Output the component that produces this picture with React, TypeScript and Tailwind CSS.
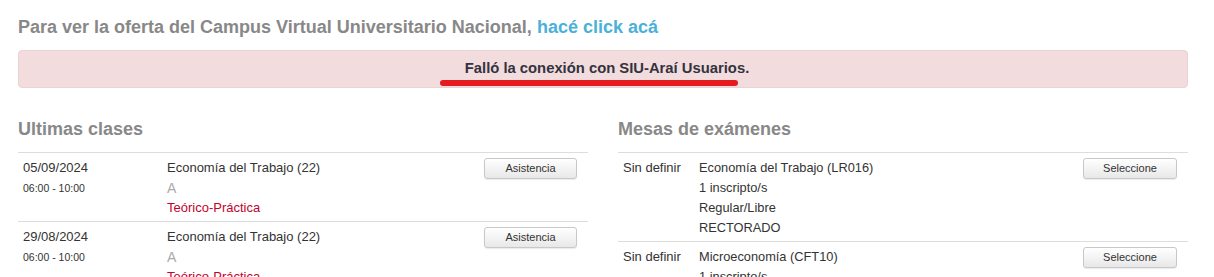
import React from "react";

const btnBase =
  "h-[21px] rounded-[3px] border border-[#c8c8c8] bg-gradient-to-b from-white to-[#e8e8e8] text-[11px] text-[#333] shadow-[0_1px_1px_rgba(0,0,0,0.08)] flex items-center justify-center";

function ClaseRow({ date }: { date: string }) {
  return (
    <div className="flex border-b border-[#dddddd] h-[69px] pt-[5px]">
      <div className="w-[149px] pl-[5px]">
        <div className="text-[13px] leading-[20px] text-[#333]">{date}</div>
        <div className="text-[10.5px] leading-[20px] text-[#333]">06:00 - 10:00</div>
      </div>
      <div className="flex-1 text-[13px] leading-[20px]">
        <div className="text-[#333]">Economía del Trabajo (22)</div>
        <div className="text-[#aaaaaa] text-[14px]">A</div>
        <div className="text-[#c0042c]">Teórico-Práctica</div>
      </div>
      <div className="pr-[11px]">
        <div className={`${btnBase} w-[93px]`}>Asistencia</div>
      </div>
    </div>
  );
}

function MesaRow({ name, lines }: { name: string; lines: string[] }) {
  return (
    <div className="flex border-b border-[#dddddd] min-h-[89px] pt-[5px]">
      <div className="w-[81px] pl-[5px] text-[13px] leading-[20px] text-[#333]">Sin definir</div>
      <div className="flex-1 text-[12.8px] leading-[20px] text-[#333]">
        <div>{name}</div>
        {lines.map((l) => (
          <div key={l}>{l}</div>
        ))}
      </div>
      <div className="pr-[11px]">
        <div className={`${btnBase} w-[94px]`}>Seleccione</div>
      </div>
    </div>
  );
}

export default function App() {
  return (
    <div
      className="w-[1214px] h-[277px] overflow-hidden bg-white"
      style={{ fontFamily: '"Liberation Sans", Arial, sans-serif' }}
    >
      <div className="w-[1170px] ml-[18px] pt-[16px]">
        <div className="text-[18px] font-bold text-[#888888] leading-[22px]">
          Para ver la oferta del Campus Virtual Universitario Nacional,{" "}
          <span className="text-[#4bb1d8]">hacé click acá</span>
        </div>
        <div className="relative mt-[12px] h-[38px] rounded-[4px] border border-[#ebd2d5] bg-[#f2dcdd] flex items-center justify-center">
          <span className="text-[14.8px] font-bold text-[#333340] pb-[2px] pl-[8px]">
            Falló la conexión con SIU-Araí Usuarios.
          </span>
          <div className="absolute left-[421px] top-[29px] w-[298px] h-[6px] rounded-full bg-[#e41b1f]" />
        </div>
        <div className="grid grid-cols-2 gap-[30px] mt-[29px]">
          <div>
            <div className="text-[18px] font-bold text-[#888888] leading-[24px] h-[35px]">
              Ultimas clases
            </div>
            <div className="border-t border-[#dddddd]">
              <ClaseRow date="05/09/2024" />
              <ClaseRow date="29/08/2024" />
            </div>
          </div>
          <div>
            <div className="text-[18px] font-bold text-[#888888] leading-[24px] h-[35px]">
              Mesas de exámenes
            </div>
            <div className="border-t border-[#dddddd]">
              <MesaRow
                name="Economía del Trabajo (LR016)"
                lines={["1 inscripto/s", "Regular/Libre", "RECTORADO"]}
              />
              <MesaRow
                name="Microeconomía (CFT10)"
                lines={["1 inscripto/s", "Regular/Libre", "RECTORADO"]}
              />
            </div>
          </div>
        </div>
      </div>
    </div>
  );
}
